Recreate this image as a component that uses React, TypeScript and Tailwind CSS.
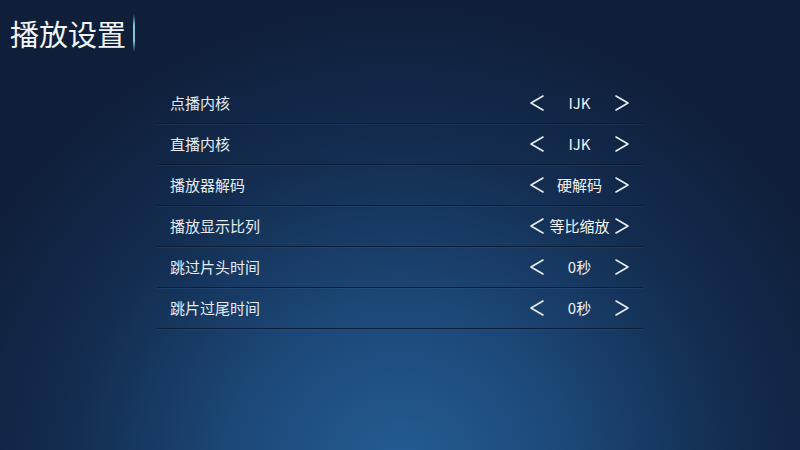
import React from "react";

const rows: [string, string][] = [
  ["点播内核", "IJK"],
  ["直播内核", "IJK"],
  ["播放器解码", "硬解码"],
  ["播放显示比列", "等比缩放"],
  ["跳过片头时间", "0秒"],
  ["跳片过尾时间", "0秒"],
];

function Chevron({ dir }: { dir: "l" | "r" }) {
  return (
    <svg width="16" height="18" viewBox="0 0 16 18" className="shrink-0">
      <path
        d={dir === "l" ? "M14 2 L2 9 L14 16" : "M2 2 L14 9 L2 16"}
        fill="none"
        stroke="#e8eef5"
        strokeWidth="1.6"
        strokeLinecap="round"
        strokeLinejoin="round"
      />
    </svg>
  );
}

export default function App() {
  return (
    <div
      className="w-[800px] h-[450px] overflow-hidden bg-[radial-gradient(ellipse_480px_470px_at_50%_105%,#255d95_0%,#1c4878_35%,#132c4f_70%,#0f1f3a_100%)] text-white"
      style={{ fontFamily: '"Noto Sans CJK SC", "Noto Sans", sans-serif' }}
    >
      <div className="flex items-center h-[64px] pl-[10px] pt-[2px]">
        <span className="text-[29px] leading-none tracking-[0px] text-[#f2f5f8]">播放设置</span>
        <div className="ml-[7px] w-[2px] h-[38px] bg-[linear-gradient(to_bottom,transparent,#7fc3e0_30%,#7fc3e0_70%,transparent)]" />
      </div>
      <div className="ml-[157px] mt-[19px] w-[486px] flex flex-col">
        {rows.map(([label, value], i) => (
          <div
            key={i}
            className="h-[41px] flex items-center border-b border-[#0d1d36] shadow-[0_1px_0_rgba(90,130,180,0.12)]"
          >
            <span className="ml-[13px] text-[15px] text-[#e6ebf1] flex-1">{label}</span>
            <div className="flex items-center w-[101px] mr-[13px] justify-between">
              <Chevron dir="l" />
              <span className="text-[15px] text-[#f0f3f7] whitespace-nowrap">{value}</span>
              <Chevron dir="r" />
            </div>
          </div>
        ))}
      </div>
    </div>
  );
}
